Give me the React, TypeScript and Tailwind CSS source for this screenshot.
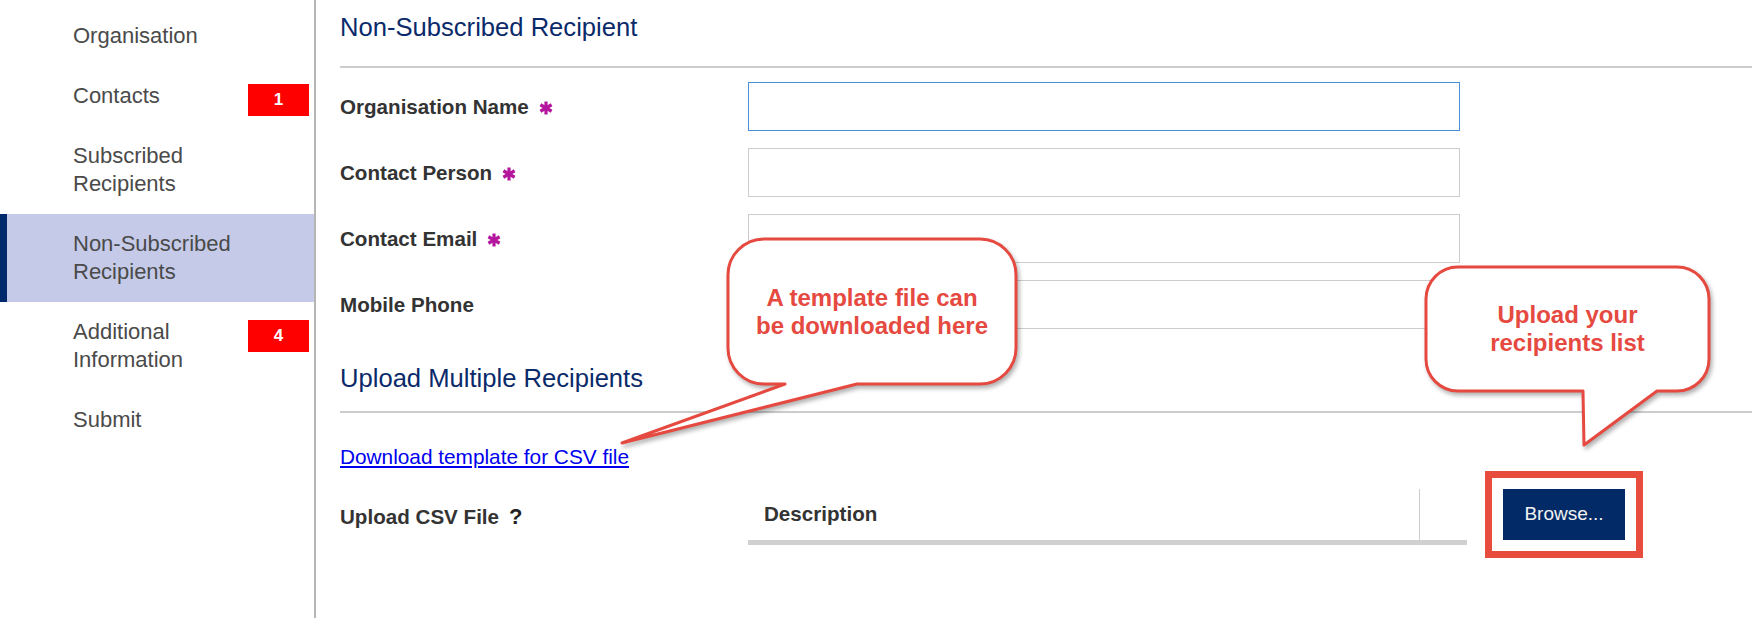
import React from 'react'

type NavItem = {
  label: string[]
  badge?: string
  active?: boolean
}

const navItems: NavItem[] = [
  { label: ['Organisation'] },
  { label: ['Contacts'], badge: '1' },
  { label: ['Subscribed', 'Recipients'] },
  { label: ['Non-Subscribed', 'Recipients'], active: true },
  { label: ['Additional', 'Information'], badge: '4' },
  { label: ['Submit'] },
]

const fields = [
  { label: 'Organisation Name', required: true, focused: true },
  { label: 'Contact Person', required: true },
  { label: 'Contact Email', required: true },
  { label: 'Mobile Phone' },
]

const RequiredStar: React.FC = () => (
  <svg width="14" height="14" viewBox="0 0 14 14" className="ml-[10px] mt-[3px] shrink-0">
    <g stroke="#b3169c" strokeWidth="3.2" strokeLinecap="butt">
      <line x1="7" y1="0.5" x2="7" y2="13.5" />
      <line x1="1.4" y1="3.75" x2="12.6" y2="10.25" />
      <line x1="1.4" y1="10.25" x2="12.6" y2="3.75" />
    </g>
  </svg>
)

const Sidebar: React.FC = () => (
  <aside className="w-[316px] shrink-0 border-r-2 border-[#b5b5b5] pt-[6px]">
    <ul>
      {navItems.map((item) => (
        <li
          key={item.label.join(' ')}
          className={`relative py-[16px] pl-[73px] text-[22px] leading-[28px] text-[#4a4a4a] ${
            item.active ? 'bg-[#c5cae9]' : ''
          }`}
        >
          {item.active && <span className="absolute left-0 top-0 h-full w-[7px] bg-[#00296b]" />}
          {item.label.map((line) => (
            <div key={line}>{line}</div>
          ))}
          {item.badge && (
            <span className="absolute right-[5px] top-[18px] flex h-[32px] w-[61px] items-center justify-center bg-[#ff0000] text-[17px] font-bold text-white">
              {item.badge}
            </span>
          )}
        </li>
      ))}
    </ul>
  </aside>
)

const LeftCallout: React.FC = () => (
  <div className="absolute left-[728px] top-[239px] flex h-[145px] w-[288px] items-center justify-center">
    <svg
      className="absolute left-0 top-0 overflow-visible drop-shadow-[2px_3px_2px_rgba(0,0,0,0.3)]"
      width="288"
      height="145"
    >
      <path
        d="M36,0 H252 A36,36 0 0 1 288,36 V109 A36,36 0 0 1 252,145 H129 L-106,204 L57,145 H36 A36,36 0 0 1 0,109 V36 A36,36 0 0 1 36,0 Z"
        fill="#ffffff"
        stroke="#e5493f"
        strokeWidth="3"
        strokeLinejoin="round"
      />
    </svg>
    <div className="relative text-center text-[24px] font-bold leading-[28px] text-[#e5493f]">
      A template file can
      <br />
      be downloaded here
    </div>
  </div>
)

const RightCallout: React.FC = () => (
  <div className="absolute left-[1426px] top-[267px] flex h-[124px] w-[283px] items-center justify-center">
    <svg
      className="absolute left-0 top-0 overflow-visible drop-shadow-[2px_3px_2px_rgba(0,0,0,0.3)]"
      width="283"
      height="124"
    >
      <path
        d="M32,0 H251 A32,32 0 0 1 283,32 V92 A32,32 0 0 1 251,124 H231 L158,178 L157,124 H32 A32,32 0 0 1 0,92 V32 A32,32 0 0 1 32,0 Z"
        fill="#ffffff"
        stroke="#e5493f"
        strokeWidth="3"
        strokeLinejoin="round"
      />
    </svg>
    <div className="relative text-center text-[24px] font-bold leading-[28px] text-[#e5493f]">
      Upload your
      <br />
      recipients list
    </div>
  </div>
)

const App: React.FC = () => {
  return (
    <div className="relative flex min-h-screen bg-white font-['Liberation_Sans',Arial,sans-serif]">
      <Sidebar />

      <main className="flex-1 pt-[12px]">
        <h2 className="pl-[24px] text-[25.6px] leading-[30px] text-[#0a2a6a]">Non-Subscribed Recipient</h2>
        <div className="ml-[24px] mt-[24px] h-[2px] bg-[#cccccc]" />

        <div className="mt-[14px] flex flex-col gap-[17px] pl-[24px]">
          {fields.map((field) => (
            <div key={field.label} className="flex h-[49px] items-center">
              <div className="flex w-[408px] items-center text-[20.6px] font-bold leading-[24px] text-[#333333]">
                {field.label}
                {field.required && <RequiredStar />}
              </div>
              <input
                type="text"
                className={`h-[49px] w-[712px] border bg-white outline-none ${
                  field.focused ? 'border-[#4a90d9]' : 'border-[#cccccc]'
                }`}
              />
            </div>
          ))}
        </div>

        <h2 className="mt-[34px] pl-[24px] text-[25.6px] leading-[30px] text-[#0a2a6a]">Upload Multiple Recipients</h2>
        <div className="ml-[24px] mt-[18px] h-[2px] bg-[#cccccc]" />

        <div className="mt-[32px] pl-[24px]">
          <a href="#" className="text-[20.8px] leading-[24px] text-[#0000ee] underline">
            Download template for CSV file
          </a>
        </div>

        <div className="flex items-start pl-[24px]">
          <div className="mt-[34px] flex w-[408px] items-center text-[20.6px] font-bold leading-[24px] text-[#333333]">
            Upload CSV File
            <span className="ml-[10px] text-[22px] font-black leading-[24px] text-[#222222]">?</span>
          </div>

          <div className="mt-[18px] flex w-[719px] border-b-[5px] border-[#d0d0d0]">
            <div className="flex h-[51px] w-[671px] items-center pl-[16px] text-[20.6px] font-bold text-[#333333]">
              Description
            </div>
            <div className="h-[51px] flex-1 border-l border-[#cccccc]" />
          </div>

          <div className="ml-[18px] border-[7px] border-[#e74c3c] p-[11px]">
            <button className="flex h-[51px] w-[122px] items-center justify-center bg-[#022a66] text-[19px] text-[#f2f2f2]">
              Browse...
            </button>
          </div>
        </div>
      </main>

      <LeftCallout />
      <RightCallout />
    </div>
  )
}

export default App
